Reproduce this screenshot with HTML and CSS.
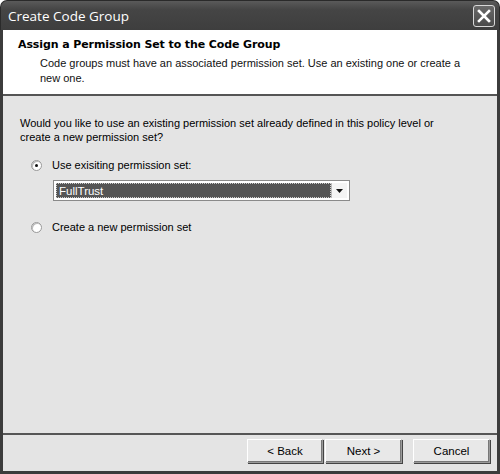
FILE: index.html
```html
<!DOCTYPE html>
<html>
<head>
<meta charset="utf-8">
<link rel="stylesheet" href="styles.css">
</head>
<body>
<div class="window">
  <div class="titlebar">
    <span class="title">Create Code Group</span>
    <div class="close">
      <svg width="14" height="14" viewBox="0 0 14 14"><path d="M2 2 L12 12 M12 2 L2 12" stroke="#fff" stroke-width="2.6" stroke-linecap="square"/></svg>
    </div>
  </div>
  <div class="frame">
    <div class="header">
      <div class="h-title">Assign a Permission Set to the Code Group</div>
      <div class="h-sub">Code groups must have an associated permission set. Use an existing one or create a new one.</div>
    </div>
    <div class="content">
      <p class="question">Would you like to use an existing permission set already defined in this policy level or create a new permission set?</p>
      <div class="option">
        <span class="radio checked"></span>
        <span class="label">Use exisiting permission set:</span>
      </div>
      <div class="combo">
        <div class="combo-value"><span>FullTrust</span></div>
        <div class="combo-btn">
          <svg width="7" height="4" viewBox="0 0 7 4"><path d="M0 0 H7 L3.5 4 Z" fill="#111"/></svg>
        </div>
      </div>
      <div class="option second">
        <span class="radio"></span>
        <span class="label">Create a new permission set</span>
      </div>
    </div>
    <div class="footer">
      <div class="btn back">&lt; Back</div>
      <div class="btn next">Next &gt;</div>
      <div class="btn cancel">Cancel</div>
    </div>
  </div>
</div>
</body>
</html>
```
FILE: styles.css
```css
* { box-sizing: border-box; }
html, body { margin: 0; padding: 0; background: #fff; }
body { width: 500px; height: 474px; overflow: hidden; font-family: "Liberation Sans", Arial, sans-serif; font-size: 11px; color: #000; }

.window { width: 500px; height: 474px; display: flex; flex-direction: column; }

.titlebar {
  height: 30px;
  background: linear-gradient(#5a5a5a, #454545 30%, #3e3e3e);
  border-radius: 7px 7px 0 0;
  border: 1px solid #2a2a2a;
  border-bottom: none;
  display: flex; align-items: center; justify-content: space-between;
  padding: 0 4px 0 7px;
}
.title { color: #fff; font-family: "Open Sans", "DejaVu Sans", sans-serif; font-size: 13.5px; }
.close {
  width: 22px; height: 22px;
  border: 1px solid #d8d8d8;
  border-radius: 3px;
  background: linear-gradient(#6a6a6a, #4a4a4a);
  display: flex; align-items: center; justify-content: center;
  margin-top: 1px;
}

.frame {
  flex: 1;
  display: flex; flex-direction: column;
  border: 3px solid #3c3c3c;
  border-top: none;
  background: #e4e4e4;
}

.header {
  height: 66px;
  background: #fff;
  border-bottom: 2px solid #555;
  padding: 8px 0 0 15px;
}
.h-title { font-weight: bold; font-family: "DejaVu Sans", sans-serif; font-size: 11px; letter-spacing: -0.1px; }
.h-sub { margin: 5px 0 0 22px; width: 432px; line-height: 15px; color: #111; }

.content { flex: 1; padding: 20px 0 0 17px; }
.question { margin: 0; width: 430px; line-height: 14px; }

.option { display: flex; align-items: center; margin: 14px 0 0 11px; height: 14px; }
.option.second { margin-top: 19px; }
.radio {
  width: 11px; height: 11px; border-radius: 50%;
  background: #fff;
  border: 1px solid #999;
  box-shadow: inset 1px 1px 0 #bbb;
  position: relative;
  margin-right: 10px;
}
.radio.checked::after {
  content: ""; position: absolute; left: 3px; top: 3px; width: 3px; height: 3px; border-radius: 50%; background: #111;
}

.combo {
  margin: 8px 0 0 33px;
  width: 297px; height: 21px;
  background: #fff;
  border: 1px solid #8a8a8a;
  display: flex; padding: 2px;
}
.combo-value { flex: 1; background: #555; color: #fff; padding: 1px 0 0 2px; border: 1px dotted #ccc; font-size: 11.5px; }
.combo-btn { width: 16px; display: flex; align-items: center; justify-content: center; background: #f4f4f4; border-left: 1px solid #bbb; }

.footer {
  height: 38px;
  border-top: 2px solid #555;
  display: flex; justify-content: flex-end; align-items: flex-start;
  padding: 4px 7px 0 0;
}
.btn {
  height: 24px;
  display: flex; align-items: center; justify-content: center;
  background: #e8e8e8;
  border: 1px solid #9a9a9a;
  border-top-color: #fff;
  border-left-color: #fff;
  box-shadow: inset -1px -1px 0 #777, 1px 1px 0 #444;
  font-size: 11.5px;
}
.back { width: 76px; }
.next { width: 77px; margin-left: 2px; }
.cancel { width: 77px; margin-left: 11px; }
```
